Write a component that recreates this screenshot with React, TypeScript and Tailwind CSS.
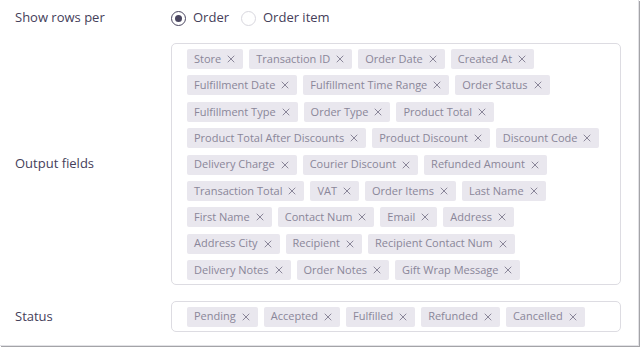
import React from "react";

const outputRows: string[][] = [
  ["Store", "Transaction ID", "Order Date", "Created At"],
  ["Fulfillment Date", "Fulfillment Time Range", "Order Status"],
  ["Fulfillment Type", "Order Type", "Product Total"],
  ["Product Total After Discounts", "Product Discount", "Discount Code"],
  ["Delivery Charge", "Courier Discount", "Refunded Amount"],
  ["Transaction Total", "VAT", "Order Items", "Last Name"],
  ["First Name", "Contact Num", "Email", "Address"],
  ["Address City", "Recipient", "Recipient Contact Num"],
  ["Delivery Notes", "Order Notes", "Gift Wrap Message"],
];

const statuses = ["Pending", "Accepted", "Fulfilled", "Refunded", "Cancelled"];

function Tag({ label }: { label: string }) {
  return (
    <span className="flex h-[20px] shrink-0 items-center gap-[6px] whitespace-nowrap rounded-[2px] bg-[#e9e7ee] pl-[7px] pr-[8px] text-[11px] text-[#8a8699]">
      {label}
      <svg width="8" height="8" viewBox="0 0 8 8" aria-hidden="true">
        <path d="M1 1L7 7M7 1L1 7" stroke="currentColor" strokeWidth="1" strokeLinecap="round" />
      </svg>
    </span>
  );
}

function Radio({ checked, label }: { checked?: boolean; label: string }) {
  return (
    <label className="flex items-center gap-[7px]">
      <span
        className={
          checked
            ? "flex h-[15px] w-[15px] items-center justify-center rounded-full border-[1.5px] border-[#4a4660]"
            : "h-[15px] w-[15px] rounded-full border border-[#d8d7de]"
        }
      >
        {checked && <span className="h-[7px] w-[7px] rounded-full bg-[#4a4660]" />}
      </span>
      <span className="text-[13px] text-[#45405a]">{label}</span>
    </label>
  );
}

export default function App() {
  return (
    <div className="h-[348px] w-[642px] bg-white font-['Open_Sans',sans-serif]">
      <div className="h-[346px] w-[639px] border-r border-b border-[#e2e2e6] bg-white pl-[15px] pr-[17px] pt-[7px] shadow-[1px_1px_0_#a4a4a8]">
        <div className="flex h-[22px] items-center">
          <div className="w-[156px] shrink-0 text-[13px] text-[#45405a]">Show rows per</div>
          <div className="flex items-center gap-[12px]">
            <Radio checked label="Order" />
            <Radio label="Order item" />
          </div>
        </div>

        <div className="mt-[14px] flex items-center">
          <div className="w-[156px] shrink-0 text-[13px] text-[#45405a]">Output fields</div>
          <div className="flex h-[242px] min-w-0 flex-1 flex-col gap-[6.4px] rounded-[5px] border border-[#dddce2] px-[15px] pt-[5px]">
            {outputRows.map((row, i) => (
              <div key={i} className="flex gap-[6px]">
                {row.map((t) => (
                  <Tag key={t} label={t} />
                ))}
              </div>
            ))}
          </div>
        </div>

        <div className="mt-[16px] flex items-center">
          <div className="w-[156px] shrink-0 text-[13px] text-[#45405a]">Status</div>
          <div className="flex h-[31px] min-w-0 flex-1 items-center gap-[6px] rounded-[5px] border border-[#dddce2] px-[15px]">
            {statuses.map((s) => (
              <Tag key={s} label={s} />
            ))}
          </div>
        </div>
      </div>
    </div>
  );
}
